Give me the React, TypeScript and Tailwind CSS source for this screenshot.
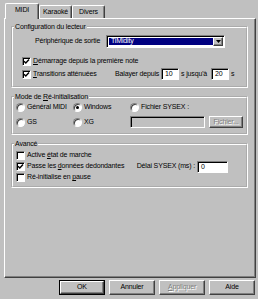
import type { ReactNode } from 'react'

function Check({ checked }: { checked?: boolean }) {
  return (
    <div className="w-[9px] h-[9px] shrink-0 bg-white border border-t-[#808080] border-l-[#808080] border-r-white border-b-white shadow-[inset_1px_1px_0_#000] flex items-center justify-center">
      {checked && (
        <svg width="7" height="7" viewBox="0 0 7 7">
          <path d="M1 3.2 L2.8 5 L6 1.5" fill="none" stroke="#000" strokeWidth="1.4" />
        </svg>
      )}
    </div>
  )
}

function Radio({ checked }: { checked?: boolean }) {
  return (
    <div className="w-[9px] h-[9px] shrink-0 rounded-full bg-white border border-t-[#808080] border-l-[#808080] border-r-white border-b-white shadow-[inset_1px_1px_0_#404040] flex items-center justify-center">
      {checked && <div className="w-[3px] h-[3px] rounded-full bg-black" />}
    </div>
  )
}

function Field({ value, className = '', disabled }: { value?: string; className?: string; disabled?: boolean }) {
  return (
    <div
      className={`h-[12px] shrink-0 border border-t-[#808080] border-l-[#808080] border-r-white border-b-white shadow-[inset_1px_1px_0_#000] pl-[3px] leading-[10px] ${
        disabled ? 'bg-[#c0c0c0]' : 'bg-white'
      } ${className}`}
    >
      {value}
    </div>
  )
}

function Group({ title, className = '', children }: { title: ReactNode; className?: string; children: ReactNode }) {
  return (
    <fieldset className={`w-[237px] border-2 border-white [border-style:groove] ${className}`}>
      <legend className="ml-[1px] px-[1px] leading-[9px]">{title}</legend>
      {children}
    </fieldset>
  )
}

function Tab({ label, active, w }: { label: string; active?: boolean; w: string }) {
  return (
    <div
      className={`${w} flex items-center justify-center border-t border-l border-t-white border-l-white border-r border-r-[#404040] shadow-[inset_-1px_0_0_#808080] rounded-t-[2px] bg-[#c0c0c0] ${
        active ? 'h-[16px] -mb-[1px] pb-[2px]' : 'h-[13px]'
      }`}
    >
      {label}
    </div>
  )
}

function Button({ children, def, disabled }: { children: ReactNode; def?: boolean; disabled?: boolean }) {
  return (
    <div className={`w-[46px] h-[15px] ${def ? 'border border-black' : ''}`}>
      <div
        className={`w-full h-full flex items-center justify-center border border-t-white border-l-white border-r-[#404040] border-b-[#404040] shadow-[inset_-1px_-1px_0_#808080] ${
          disabled ? 'text-[#808080] [text-shadow:1px_1px_0_#fff]' : ''
        }`}
      >
        {children}
      </div>
    </div>
  )
}

export default function App() {
  return (
    <div className="w-[258px] h-[299px] bg-[#c0c0c0] pt-[3px] pl-[4px] text-black text-[7px] tracking-[-0.15px] font-['Liberation_Sans',Arial,sans-serif] overflow-hidden">
      {/* Tabs */}
      <div className="relative z-10 flex items-end h-[15px] pl-[1px]">
        <Tab label="MIDI" active w="w-[34px]" />
        <Tab label="Karaoké" w="w-[33px]" />
        <Tab label="Divers" w="w-[33px]" />
      </div>

      {/* Panel */}
      <div className="w-[252px] h-[260px] border border-t-white border-l-white border-r-[#404040] border-b-[#404040] shadow-[inset_-1px_-1px_0_#808080] pt-[3px] pl-[6px]">
        <Group title="Configuration du lecteur" className="h-[66px]">
          <div className="flex items-center h-[13px] mt-[4px] pl-[22px]">
            <span className="w-[71px] shrink-0">Périphérique de sortie</span>
            <div className="w-[119px] h-[13px] flex border border-t-[#808080] border-l-[#808080] border-r-white border-b-white shadow-[inset_1px_1px_0_#000] bg-white p-[1px]">
              <div className="flex-1 flex items-center ml-[1px] my-[1px] bg-[#000080] text-white pl-[2px]">
                TiMidity
              </div>
              <div className="w-[10px] h-full flex items-center justify-center bg-[#c0c0c0] border border-t-white border-l-white border-r-[#404040] border-b-[#404040] shadow-[inset_-1px_-1px_0_#808080]">
                <svg width="5" height="3" viewBox="0 0 5 3">
                  <path d="M0 0 H5 L2.5 3 Z" fill="#000" />
                </svg>
              </div>
            </div>
          </div>
          <div className="flex items-center gap-[2px] h-[12px] mt-[7px] pl-[9px]">
            <Check checked />
            <span>
              <u>D</u>émarrage depuis la première note
            </span>
          </div>
          <div className="flex items-center h-[12px] mt-[1px] pl-[9px]">
            <div className="w-[93px] flex items-center gap-[2px]">
              <Check checked />
              <span>
                <u>T</u>ransitions atténuées
              </span>
            </div>
            <span className="w-[46px] shrink-0">Balayer depuis</span>
            <Field value="10" className="w-[18px]" />
            <span className="w-[32px] shrink-0 pl-[2px]">s jusqu'à</span>
            <Field value="20" className="w-[18px]" />
            <span className="pl-[2px]">s</span>
          </div>
        </Group>

        <Group
          title={
            <>
              Mode de <u>R</u>é-initialisation
            </>
          }
          className="h-[43px] mt-[4px]"
        >
          <div className="flex items-center h-[11px] mt-[1px] pl-[3px]">
            <div className="w-[57px] flex items-center gap-[2px]">
              <Radio />
              <span>Général MIDI</span>
            </div>
            <div className="w-[57px] flex items-center gap-[2px]">
              <Radio checked />
              <span>Windows</span>
            </div>
            <div className="flex items-center gap-[2px]">
              <Radio />
              <span>Fichier SYSEX :</span>
            </div>
          </div>
          <div className="flex items-center h-[12px] mt-[3px] pl-[3px]">
            <div className="w-[57px] flex items-center gap-[2px]">
              <Radio />
              <span>GS</span>
            </div>
            <div className="w-[57px] flex items-center gap-[2px]">
              <Radio />
              <span>XG</span>
            </div>
            <Field disabled className="w-[75px]" />
            <div className="ml-[4px] w-[34px] h-[12px] flex items-center justify-center border border-t-white border-l-white border-r-[#404040] border-b-[#404040] shadow-[inset_-1px_-1px_0_#808080] text-[#808080] [text-shadow:1px_1px_0_#fff]">
              Fichier...
            </div>
          </div>
        </Group>

        <Group title="Avancé" className="h-[49px] mt-[4px]">
          <div className="flex items-center gap-[2px] h-[11px] mt-[2px] pl-[3px]">
            <Check />
            <span>
              Active <u>é</u>tat de marche
            </span>
          </div>
          <div className="flex items-center h-[11px] pl-[3px] pr-[18px]">
            <div className="flex items-center gap-[2px]">
              <Check checked />
              <span>
                Passe les <u>d</u>onnées dedondantes
              </span>
            </div>
            <div className="ml-auto flex items-center gap-[2px]">
              <span>Délai SYSEX (ms) :</span>
              <Field value="0" className="w-[31px]" />
            </div>
          </div>
          <div className="flex items-center gap-[2px] h-[11px] pl-[3px]">
            <Check />
            <span>
              Ré-initialise en <u>p</u>ause
            </span>
          </div>
        </Group>
      </div>

      {/* Buttons */}
      <div className="w-[252px] flex justify-end gap-[4px] mt-[2px] pr-[1px]">
        <Button def>OK</Button>
        <Button>Annuler</Button>
        <Button disabled>
          <span>
            <u>A</u>ppliquer
          </span>
        </Button>
        <Button>Aide</Button>
      </div>
    </div>
  )
}
